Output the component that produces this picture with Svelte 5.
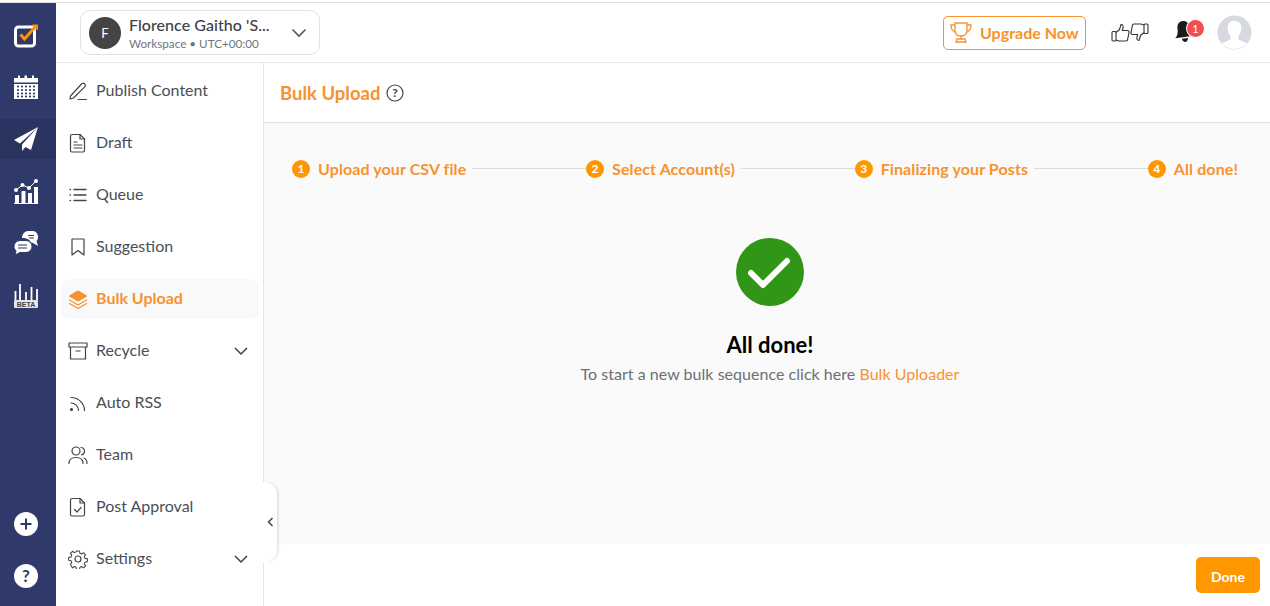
<script>
	const navItems = [
		{ label: 'Publish Content', icon: 'pen' },
		{ label: 'Draft', icon: 'doc' },
		{ label: 'Queue', icon: 'list' },
		{ label: 'Suggestion', icon: 'bookmark' },
		{ label: 'Bulk Upload', icon: 'layers', active: true },
		{ label: 'Recycle', icon: 'archive', caret: true },
		{ label: 'Auto RSS', icon: 'rss' },
		{ label: 'Team', icon: 'team' },
		{ label: 'Post Approval', icon: 'approval' },
		{ label: 'Settings', icon: 'gear', caret: true }
	];

	const steps = ['Upload your CSV file', 'Select Account(s)', 'Finalizing your Posts', 'All done!'];
</script>

<div class="app">
	<aside class="rail">
		<div class="rail-top">
			<div class="rail-item">
				<svg width="26" height="26" viewBox="0 0 26 26">
					<rect x="2.500" y="5" width="19" height="19" rx="3" fill="#2f3a6b" stroke="#fff" stroke-width="3" />
					<path d="M7.500 12.500l4 4.500L23 4" fill="none" stroke="#ff9300" stroke-width="3" />
					<path d="M19 2.500h6v6z" fill="#ff9300" />
				</svg>
			</div>
			<div class="rail-item">
				<svg width="26" height="26" viewBox="0 0 26 26">
					<path d="M1 4h4V1.500h2V4h4.500V1.500h2.500V4H19V1.500h2V4h4v4.500H1z" fill="#fff" />
					<path d="M1 10h24v15H1z" fill="#fff" />
					<g fill="#2f3a6b">
						{#each [12.500, 16, 19.500, 22.500] as y}
							{#each [5, 9, 13, 17, 21] as x}
								<circle cx={x} cy={y} r="1.100" />
							{/each}
						{/each}
					</g>
				</svg>
			</div>
			<div class="rail-item selected">
				<svg width="26" height="26" viewBox="0 0 26 26">
					<path d="M25 1L1 14l6 3.500zM25 1L9 18.500l0 6.500 3.500-4 5.500 3z" fill="#fff" />
				</svg>
			</div>
			<div class="rail-item">
				<svg width="26" height="26" viewBox="0 0 26 26">
					<g fill="#fff">
						<rect x="2" y="17" width="4" height="8" />
						<rect x="8.500" y="13" width="4" height="12" />
						<rect x="15" y="15" width="4" height="10" />
						<rect x="21" y="9" width="4" height="16" />
						<rect x="1" y="25" width="24" height="1" />
						<circle cx="3" cy="12" r="2" />
						<circle cx="9.500" cy="7" r="2" />
						<circle cx="16" cy="10" r="2" />
						<circle cx="23" cy="3" r="2" />
					</g>
					<path d="M3 12l6.500-5 6.500 3 7-7" fill="none" stroke="#fff" stroke-width="1" />
				</svg>
			</div>
			<div class="rail-item">
				<svg width="26" height="26" viewBox="0 0 26 26">
					<path d="M15 1h5a5.500 5.500 0 0 1 5 6c0 2-.5 3-1.500 4l1.500 5-5-3-2-.5C17 10 14 8 9 8c0-4 3-7 6-7z" fill="#fff" />
					<path d="M7 10.500h6a6 6 0 0 1 0 12H7l-5 2.500 1-4A6 6 0 0 1 7 10.500z" fill="#fff" stroke="#2f3a6b" stroke-width="1" />
					<path d="M5 15h9M5 18h9M15 5.500h6M16 8h5" stroke="#2f3a6b" stroke-width="1.200" />
				</svg>
			</div>
			<div class="rail-item">
				<svg width="26" height="26" viewBox="0 0 26 26">
					<path d="M2.500 9v9M7 2v16M13 10v8M18.500 5v13M24 7v11" stroke="#fff" stroke-width="1.800" />
					<rect x="1" y="18" width="24" height="8" rx="1" fill="#e6e6e6" />
					<text x="13" y="25" text-anchor="middle" class="beta">BETA</text>
				</svg>
			</div>
		</div>
		<div class="rail-bottom">
			<svg width="24" height="24" viewBox="0 0 24 24">
				<circle cx="12" cy="12" r="12" fill="#fff" />
				<path d="M6.500 12h11M12 6.500v11" stroke="#2f3a6b" stroke-width="2" />
			</svg>
			<span class="round-btn">?</span>
		</div>
	</aside>

	<div class="content">
		<header class="topbar">
			<div class="workspace">
				<span class="avatar">F</span>
				<div class="ws-text">
					<div class="ws-name">Florence Gaitho 'S...</div>
					<div class="ws-sub">Workspace • UTC+00:00</div>
				</div>
				<svg class="ws-caret" width="16" height="10" viewBox="0 0 16 10">
					<path d="M1.500 1.500L8 8l6.500-6.500" fill="none" stroke="#555" stroke-width="1.600" />
				</svg>
			</div>
			<div class="top-right">
				<button class="upgrade">
					<svg width="22" height="23" viewBox="0 0 22 23" fill="none" stroke="#f7922f" stroke-width="1.300">
						<path d="M5 2h12v7c0 4-2.500 6-6 6s-6-2-6-6z" />
						<path d="M5 4H1c0 4 1.500 6.500 5 7.500M17 4h4c0 4-1.500 6.500-5 7.500" />
						<path d="M11 15v3M7 18h8l1 3H6z" />
					</svg>
					Upgrade Now
				</button>
				<div class="thumbs">
					<svg width="19" height="19" viewBox="0 0 19 19" fill="none" stroke="#333" stroke-width="1.100" stroke-linejoin="round">
						<rect x="1" y="8.500" width="4" height="9.500" rx="1" />
						<path d="M5 9.500l3.500-3L10 1.500c2 0 2.500 1.800 2 3.500l-.7 2.500h5.200c1.300 0 1.800 1.200 1.500 2.200L16.500 17c-.3.700-.9 1-1.500 1H8l-3-1" />
					</svg>
					<svg width="19" height="19" viewBox="0 0 19 19" fill="none" stroke="#333" stroke-width="1.100" stroke-linejoin="round">
						<g transform="rotate(180 9.500 9.500)">
							<rect x="1" y="8.500" width="4" height="9.500" rx="1" />
							<path d="M5 9.500l3.500-3L10 1.500c2 0 2.500 1.800 2 3.500l-.7 2.500h5.200c1.300 0 1.800 1.200 1.500 2.200L16.500 17c-.3.700-.9 1-1.500 1H8l-3-1" />
						</g>
					</svg>
				</div>
				<div class="bell">
					<svg width="20" height="23" viewBox="0 0 20 23">
						<g transform="rotate(-8 10 12)">
							<path d="M10 1c4 0 6 3 6 7 0 4 1 7 3.500 9H.5C3 15 4 12 4 8c0-4 2-7 6-7z" fill="#1a1a1a" />
							<path d="M7 18.500h6c0 2-1.200 3.500-3 3.500s-3-1.500-3-3.500z" fill="#1a1a1a" />
						</g>
					</svg>
					<span class="badge">1</span>
				</div>
				<svg class="user" width="35" height="35" viewBox="0 0 36 36">
					<defs>
						<clipPath id="userclip"><circle cx="18" cy="18" r="17" /></clipPath>
					</defs>
					<circle cx="18" cy="18" r="17.500" fill="#d6d9e0" />
					<g clip-path="url(#userclip)" fill="#fff">
						<path d="M18 6c5 0 7.500 4 7 9-.3 3-1.500 5-3 7v3c3 2 8 3 10 5v6H4v-6c2-2 7-3 10-5v-3c-1.500-2-2.700-4-3-7-.5-5 2-9 7-9z" />
					</g>
				</svg>
			</div>
		</header>

		<div class="body">
			<nav class="sidenav">
				{#each navItems as item}
					<div class="nav-row">
						<div class="nav-item" class:active={item.active}>
							<svg class="nav-icon" width="20" height="20" viewBox="0 0 20 20" fill="none" stroke="#444" stroke-width="1.200" stroke-linecap="round" stroke-linejoin="round">
								{#if item.icon === 'pen'}
									<path d="M2.500 15L13.500 3c1-1 2.500-1 3.300-.2.900.9.700 2.200-.1 3L5.500 17l-3.500 1z" />
									<path d="M10 18.500h8.500" />
								{:else if item.icon === 'doc'}
									<path d="M4 1.500h8l4.500 4.500v11.500a1.500 1.500 0 0 1-1.500 1.500H4a1.500 1.500 0 0 1-1.500-1.500V3A1.500 1.500 0 0 1 4 1.500z" />
									<path d="M12 1.500V6h4.500M6 9h3M6 12h8M6 15h8" />
								{:else if item.icon === 'list'}
									<path d="M6 4.500h12M6 10h12M6 15.500h12" stroke-width="1.300" />
									<path d="M2 4.500h.5M2 10h.5M2 15.500h.5" stroke-width="1.300" />
								{:else if item.icon === 'bookmark'}
									<path d="M4 2h12v16l-6-4.500L4 18z" />
								{:else if item.icon === 'layers'}
									<path d="M10 2l8.500 5L10 12 1.500 7z" fill="#f7922f" stroke="#f7922f" />
									<path d="M1.500 11L10 16l8.500-5M1.500 14.500L10 19.500l8.500-5" stroke="#f7922f" />
								{:else if item.icon === 'archive'}
									<path d="M1 2h18v4H1zM2.500 6v12h15V6M8 10h4" />
								{:else if item.icon === 'rss'}
									<circle cx="3.500" cy="16.500" r="1" fill="#444" />
									<path d="M3 10c4 0 7.500 3 7.500 7.500M3 4.500c7.500 0 13.500 6 13.500 13" />
								{:else if item.icon === 'team'}
									<circle cx="8" cy="6" r="4" />
									<path d="M1 18.500c0-4 2.500-6 7-6s7 2 7 6M13 2.500c2 .3 3.500 1.800 3.500 3.700S15 9.500 13.500 9.800M16 13c2 .8 3 2.700 3 5.500" />
								{:else if item.icon === 'approval'}
									<path d="M4 1.500h8l4.500 4.500v11.500a1.500 1.500 0 0 1-1.500 1.500H4a1.500 1.500 0 0 1-1.500-1.500V3A1.500 1.500 0 0 1 4 1.500z" />
									<path d="M12 1.500V6h4.500M6.500 12.500l2.500 2.500 4-4.500" />
								{:else if item.icon === 'gear'}
									<circle cx="10" cy="10" r="3" />
									<path d="M8.300 1h3.400l.5 2.600 1.800.8 2.200-1.500 2.300 2.400-1.500 2.100.8 1.900 2.700.5v3.300l-2.700.5-.8 1.900 1.500 2.100-2.300 2.400-2.200-1.500-1.800.8-.5 2.600H8.300l-.5-2.600-1.800-.8-2.200 1.500L1.500 16l1.500-2.100-.8-1.900L-.5 11.500V8.200l2.700-.5.800-1.900L1.500 3.700l2.300-2.400L6 2.800l1.800-.8z" transform="translate(1.100 1.100) scale(.89)" />
								{/if}
							</svg>
							<span class="nav-label">{item.label}</span>
							{#if item.caret}
								<svg class="nav-caret" width="14" height="8" viewBox="0 0 14 8">
									<path d="M1 1l6 6 6-6" fill="none" stroke="#444" stroke-width="1.500" />
								</svg>
							{/if}
						</div>
					</div>
				{/each}
				<div class="collapse">
					<svg width="7" height="10" viewBox="0 0 7 10">
						<path d="M5.500 1L1.500 5l4 4" fill="none" stroke="#444" stroke-width="1.500" />
					</svg>
				</div>
			</nav>

			<main class="main">
				<div class="main-head">
					<h1>Bulk Upload</h1>
					<svg width="18" height="18" viewBox="0 0 18 18">
						<circle cx="9" cy="9" r="8" fill="none" stroke="#444" stroke-width="1.200" />
						<text x="9" y="13" text-anchor="middle" class="qmark">?</text>
					</svg>
				</div>
				<div class="main-body">
					<ol class="steps">
						{#each steps as step, i}
							<li class="step">
								<span class="step-num">{i + 1}</span>
								<span class="step-label">{step}</span>
							</li>
							{#if i < steps.length - 1}
								<li class="step-line" aria-hidden="true"></li>
							{/if}
						{/each}
					</ol>
					<div class="done">
						<svg width="68" height="68" viewBox="0 0 68 68">
							<circle cx="34" cy="34" r="34" fill="#319618" />
							<path d="M15 35l12 12 24-24" fill="none" stroke="#fff" stroke-width="6" stroke-linecap="round" stroke-linejoin="round" />
						</svg>
						<h2>All done!</h2>
						<p>To start a new bulk sequence click here <span class="link">Bulk Uploader</span></p>
					</div>
				</div>
				<footer class="main-foot">
					<button class="done-btn">Done</button>
				</footer>
			</main>
		</div>
	</div>
</div>

<style>
	:global(body) {
		margin: 0;
	}

	.app {
		display: flex;
		height: 606px;
		overflow: hidden;
		box-sizing: border-box;
		padding-top: 2px;
		background: #fff;
		font-family: Lato, "Open Sans", sans-serif;
		color: #4a4f57;
	}

	.rail {
		width: 56px;
		flex: none;
		box-sizing: border-box;
		border-top: 1px solid #e0e0e0;
		background: #2f3a6b;
		display: flex;
		flex-direction: column;
		justify-content: space-between;
	}

	.rail-top {
		padding-top: 12px;
		display: flex;
		flex-direction: column;
	}

	.rail-item {
		height: 40px;
		margin-bottom: 12px;
		padding-right: 4px;
		display: flex;
		align-items: center;
		justify-content: center;
	}

	.rail-item.selected {
		background: #2a3461;
	}

	.beta {
		font: 700 7px "Liberation Sans", sans-serif;
		fill: #444;
	}

	.rail-bottom {
		display: flex;
		flex-direction: column;
		align-items: center;
		gap: 28px;
		padding: 0 4px 18px 0;
	}

	.round-btn {
		width: 24px;
		height: 24px;
		border-radius: 50%;
		background: #fff;
		color: #2f3a6b;
		font: 700 17px/24px Lato, sans-serif;
		text-align: center;
	}

	.content {
		flex: 1;
		min-width: 0;
		box-sizing: border-box;
		border-top: 1px solid #e0e0e0;
		display: flex;
		flex-direction: column;
	}

	.topbar {
		height: 60px;
		flex: none;
		box-sizing: border-box;
		border-bottom: 1px solid #e6e6e6;
		display: flex;
		align-items: center;
		justify-content: space-between;
		padding: 0 18px 0 24px;
	}

	.workspace {
		width: 240px;
		height: 45px;
		box-sizing: border-box;
		border: 1px solid #e2e2e2;
		border-radius: 10px;
		display: flex;
		align-items: center;
		padding: 0 12px 0 8px;
	}

	.avatar {
		width: 32px;
		height: 32px;
		border-radius: 50%;
		background: #444;
		color: #fff;
		font-size: 13px;
		line-height: 32px;
		text-align: center;
		flex: none;
	}

	.ws-text {
		margin-left: 8px;
		padding-top: 2px;
		flex: 1;
	}

	.ws-name {
		font-size: 16px;
		line-height: 18px;
		letter-spacing: 0.05px;
		color: #3c4149;
		font-weight: 500;
	}

	.ws-sub {
		margin-top: 2px;
		font-size: 11.7px;
		line-height: 15px;
		color: #6f7680;
	}

	.top-right {
		display: flex;
		align-items: center;
	}

	.upgrade {
		width: 143px;
		height: 34px;
		box-sizing: border-box;
		border: 1px solid #f7922f;
		border-radius: 5px;
		background: #fff;
		color: #f7922f;
		font: 700 16px Lato, sans-serif;
		display: flex;
		align-items: center;
		gap: 8px;
		padding: 0 6px;
		margin-right: 25px;
	}

	.thumbs {
		display: flex;
		margin-right: 25px;
	}

	.bell {
		position: relative;
		width: 22px;
		height: 26px;
		margin-right: 21px;
	}

	.badge {
		position: absolute;
		top: 0;
		right: -8px;
		width: 17px;
		height: 17px;
		border-radius: 50%;
		background: #f44d4d;
		box-shadow: 0 0 0 1px #fff;
		color: #fff;
		font-size: 11px;
		line-height: 17px;
		text-align: center;
	}

	.body {
		flex: 1;
		min-height: 0;
		display: flex;
	}

	.sidenav {
		position: relative;
		width: 208px;
		flex: none;
		box-sizing: border-box;
		border-right: 1px solid #e6e6e6;
		padding-top: 2px;
	}

	.nav-row {
		height: 52px;
		display: flex;
		align-items: center;
		padding: 0 4px 0 5px;
	}

	.nav-item {
		flex: 1;
		height: 40px;
		border-radius: 8px;
		display: flex;
		align-items: center;
		padding: 0 10px 0 7px;
		font-size: 16px;
	}

	.nav-item.active {
		background: #f8f9fb;
		color: #f7922f;
		font-weight: 700;
	}

	.nav-icon {
		flex: none;
		margin-right: 8px;
	}

	.nav-label {
		flex: 1;
		margin-bottom: 4px;
	}

	.nav-caret {
		margin-right: 1px;
	}

	.collapse {
		position: absolute;
		top: 419px;
		right: -14px;
		width: 14px;
		height: 80px;
		box-sizing: border-box;
		background: #fff;
		border-radius: 0 12px 12px 0;
		box-shadow: 2px 0 3px -1px rgba(0, 0, 0, 0.15);
		display: flex;
		align-items: center;
		justify-content: center;
	}

	.main {
		flex: 1;
		min-width: 0;
		display: flex;
		flex-direction: column;
	}

	.main-head {
		height: 60px;
		flex: none;
		box-sizing: border-box;
		border-bottom: 1px solid #e2e2e2;
		display: flex;
		align-items: center;
		gap: 6px;
		padding-left: 16px;
	}

	h1 {
		margin: 0;
		font-size: 18.5px;
		font-weight: 700;
		color: #f7922f;
	}

	.qmark {
		font: 700 12px Lato, sans-serif;
		fill: #444;
	}

	.main-body {
		flex: 1;
		background: #fafafa;
	}

	.steps {
		list-style: none;
		margin: 0;
		padding: 36px 32px 0 28px;
		display: flex;
		align-items: center;
	}

	.step {
		display: flex;
		align-items: center;
		gap: 8px;
		color: #f7922f;
		font-size: 16px;
		letter-spacing: 0.1px;
		font-weight: 700;
		white-space: nowrap;
	}

	.step-num {
		width: 18px;
		height: 18px;
		border-radius: 50%;
		background: #ff9800;
		color: #fff;
		font-size: 12px;
		line-height: 18px;
		text-align: center;
	}

	.step-line {
		flex: 1;
		height: 1px;
		background: #dcdcdc;
		margin: 0 0 0 6px;
	}

	.done {
		display: flex;
		flex-direction: column;
		align-items: center;
		margin-top: 60px;
		padding-left: 6px;
	}

	h2 {
		margin: 26px 0 0;
		font-size: 22px;
		line-height: 26px;
		font-weight: 700;
		color: #000;
	}

	.done p {
		margin: 6px 0 0;
		font-size: 16px;
		line-height: 20px;
		letter-spacing: 0.03px;
		color: #6b7078;
	}

	.link {
		color: #f7922f;
	}

	.main-foot {
		height: 62px;
		flex: none;
		display: flex;
		align-items: center;
		justify-content: flex-end;
		padding-right: 10px;
		background: #fff;
	}

	.done-btn {
		width: 64px;
		height: 36px;
		border: none;
		border-radius: 5px;
		background: #ff9800;
		color: #fff;
		font: 700 14px Lato, sans-serif;
		padding-top: 3px;
	}
</style>
